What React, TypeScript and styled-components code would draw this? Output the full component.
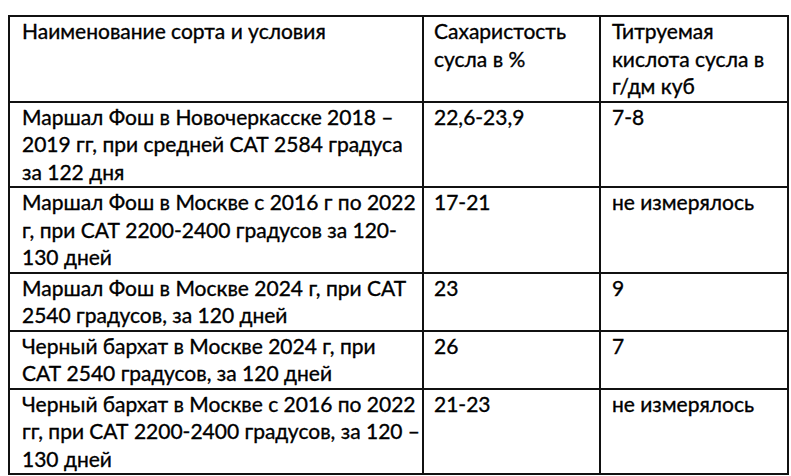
import { createGlobalStyle } from "styled-components";
import styled from "styled-components";

const GlobalStyle = createGlobalStyle`
  body {
    margin: 0;
    background: #ffffff;
    font-family: Lato, "Open Sans", sans-serif;
  }
`;

const Page = styled.div`
  padding: 15px 0 0 8px;
`;

const Table = styled.table`
  border-collapse: collapse;
  table-layout: fixed;
  width: 779px;
  color: #000;
  font-size: 21px;
  line-height: 27.5px;
  -webkit-text-stroke: 0.35px #000;
`;

const Cell = styled.td<{ $pad?: number }>`
  border: 2px solid #111;
  vertical-align: top;
  padding: 0 4px 1px ${(p) => p.$pad ?? 11}px;
  white-space: nowrap;
`;

const Line = styled.div``;

type Row = { name: string[]; sugar: string[]; acid: string[] };

const header: Row = {
  name: ["Наименование сорта и условия"],
  sugar: ["Сахаристость", "сусла в %"],
  acid: ["Титруемая", "кислота сусла в", "г/дм куб"],
};

const rows: Row[] = [
  {
    name: [
      "Маршал Фош в Новочеркасске 2018 –",
      "2019 гг, при средней САТ 2584 градуса",
      "за 122 дня",
    ],
    sugar: ["22,6-23,9"],
    acid: ["7-8"],
  },
  {
    name: [
      "Маршал Фош в Москве с 2016 г по 2022",
      "г, при САТ 2200-2400 градусов за 120-",
      "130 дней",
    ],
    sugar: ["17-21"],
    acid: ["не измерялось"],
  },
  {
    name: ["Маршал Фош в Москве 2024 г, при САТ", "2540 градусов, за 120 дней"],
    sugar: ["23"],
    acid: ["9"],
  },
  {
    name: ["Черный бархат в Москве 2024 г, при", "САТ 2540 градусов, за 120 дней"],
    sugar: ["26"],
    acid: ["7"],
  },
  {
    name: [
      "Черный бархат в Москве с 2016 по 2022",
      "гг, при САТ 2200-2400 градусов, за 120 –",
      "130 дней",
    ],
    sugar: ["21-23"],
    acid: ["не измерялось"],
  },
];

const Lines = ({ items }: { items: string[] }) => (
  <>
    {items.map((t) => (
      <Line key={t}>{t}</Line>
    ))}
  </>
);

function TableRow({ row }: { row: Row }) {
  return (
    <tr>
      <Cell $pad={12}>
        <Lines items={row.name} />
      </Cell>
      <Cell $pad={10}>
        <Lines items={row.sugar} />
      </Cell>
      <Cell>
        <Lines items={row.acid} />
      </Cell>
    </tr>
  );
}

export default function App() {
  return (
    <Page>
      <GlobalStyle />
      <Table>
        <colgroup>
          <col style={{ width: 414 }} />
          <col style={{ width: 177 }} />
          <col style={{ width: 188 }} />
        </colgroup>
        <tbody>
          <TableRow row={header} />
          {rows.map((r) => (
            <TableRow key={r.name[0]} row={r} />
          ))}
        </tbody>
      </Table>
    </Page>
  );
}
